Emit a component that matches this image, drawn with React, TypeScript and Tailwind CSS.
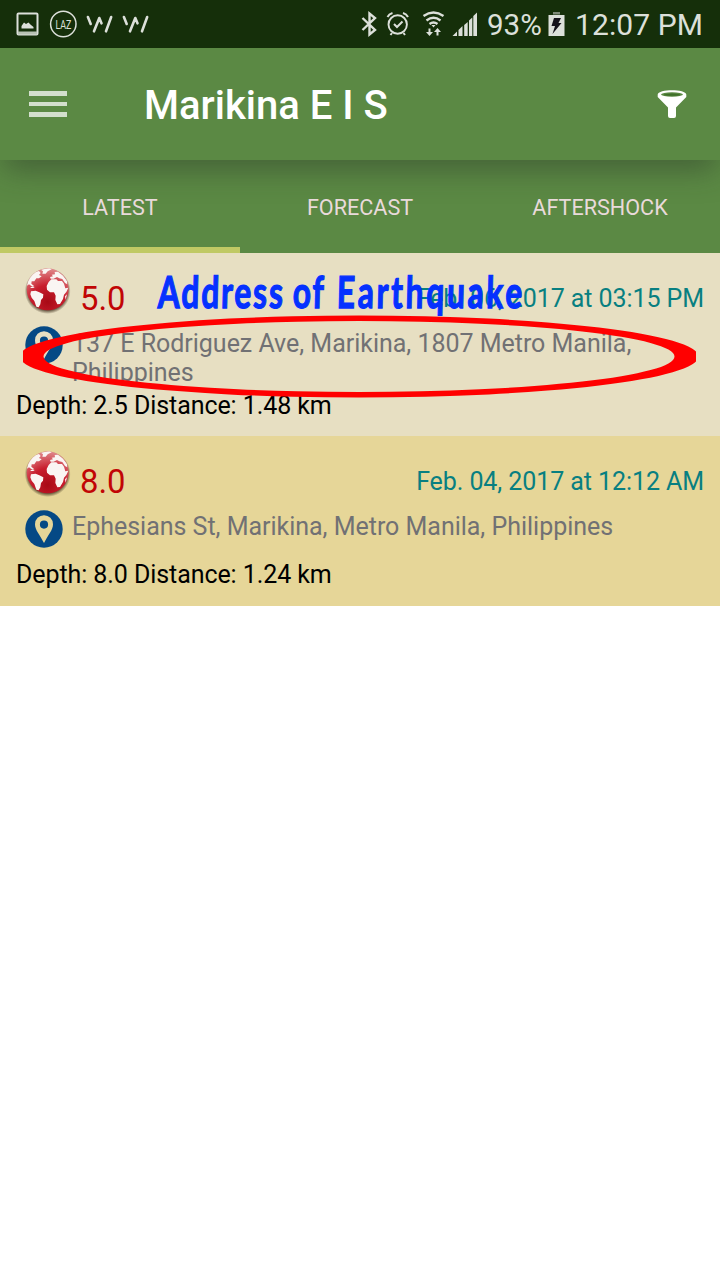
import React from "react";

const land = "#faf5f3";

function Globe() {
  return (
    <svg className="block h-[48px] w-[48px] shrink-0" viewBox="73 49 144 144">
      <defs>
        <radialGradient id="sea" cx="50%" cy="80%" r="80%">
          <stop offset="0" stopColor="#a80a16" />
          <stop offset=".5" stopColor="#c81d2d" />
          <stop offset="1" stopColor="#e08a8c" />
        </radialGradient>
        <radialGradient id="under">
          <stop offset=".85" stopColor="#3a2a18" stopOpacity=".7" />
          <stop offset="1" stopColor="#3a2a18" stopOpacity="0" />
        </radialGradient>
        <clipPath id="disc"><circle cx="144" cy="113" r="63" /></clipPath>
      </defs>
      <circle cx="144" cy="118" r="69" fill="url(#under)" />
      <circle cx="144" cy="113" r="63" fill="url(#sea)" />
      <g fill={land} clipPath="url(#disc)">
        <path d="M80 104L84 80 102 62 118 58 123 64 118 70 126 74 118 80 110 80 104 89 96 89 95 96 104 104 98 105 88 98Z" />
        <path d="M124 54L150 49 156 53 144 59 138 66 128 66 130 59Z" />
        <path d="M94 119L108 117 119 122 131 128 130 138 124 145 122 158 117 167 110 165 104 148 96 138 92 128Z" />
        <path d="M153 81L151 76 160 74 156 69 166 68 165 61 175 60 190 72 202 88 203 98 196 94 188 82 179 80 172 76 162 81Z" />
        <path d="M147 91L155 83 170 83 175 88 187 88 193 96 197 110 206 108 200 121 193 129 190 142 181 157 173 158 167 145 168 132 163 122 151 122 142 114 141 103Z" />
        <path d="M196 134L202 128 198 144Z" />
        <path d="M92 106L101 106 105 109 94 109Z" />
      </g>
    </svg>
  );
}

function Pin({ hole }: { hole: string }) {
  return (
    <svg className="block h-[38px] w-[38px] shrink-0" viewBox="0 0 38 38">
      <circle cx="19" cy="19" r="18.7" fill="#054985" />
      <path fillRule="evenodd" fill={hole} d="M19 5.2A9 9 0 0 0 10 14.2C10 20 15 25 19 33C23 25 28 20 28 14.2A9 9 0 0 0 19 5.2ZM19 10.5A4.1 4.1 0 1 1 19 18.7A4.1 4.1 0 0 1 19 10.5Z" />
    </svg>
  );
}

function StatusBar() {
  return (
    <div className="flex h-[48px] items-center bg-[#152f0a] text-[#dce0da]">
      <svg className="block h-[48px] w-[160px]" viewBox="0 0 160 48" fill="none" stroke="#dce0da">
        <rect x="17.5" y="13.5" width="20" height="21" rx="1" strokeWidth="2" />
        <path d="M18 33H37" strokeWidth="3" stroke="#b9c2b5" />
        <path d="M21.5 28.5V26L24 22.5 26 24 28.5 22.5 31 25 33.5 27V28.5Z" fill="#dce0da" stroke="none" />
        <circle cx="63.3" cy="24" r="12.7" strokeWidth="1.5" />
        <text x="55.4" y="28.8" fontSize="13" textLength="16" lengthAdjust="spacingAndGlyphs" fontFamily="Roboto, sans-serif" fill="#dce0da" stroke="none">LAZ</text>
        <g strokeWidth="2.6" strokeLinecap="round" strokeLinejoin="round">
          <path d="M87.900 17L90.700 24M94 31.300L99.300 18L101.500 23.300M106 31.300L111.200 17" />
          <path d="M123.900 17L126.700 24M130 31.300L135.300 18L137.500 23.300M142 31.300L147.200 17" />
        </g>
      </svg>
      <svg className="ml-[198px] block h-[48px] w-[122px]" viewBox="358 0 122 48" fill="none" stroke="#dce0da">
        <path d="M362.500 18L375 30L369.500 34.500V13.500L375 18L362.500 30" strokeWidth="2.400" />
        <circle cx="397.700" cy="24.500" r="9.200" strokeWidth="1.900" />
        <path d="M394 24L397 27L402.500 21.500M387.500 17Q389 14 392.500 13M403 13Q406.500 14 408 17M392 33L390.500 35M403.500 33L405 35" strokeWidth="2" />
        <path d="M423.500 16Q433.500 9 443.500 16M426.500 20.500Q433.500 15 440.500 20.500M429.500 24Q433.500 21 437.500 24" strokeWidth="2.300" />
        <path d="M431.500 25L433.500 27.500L435.500 25Z" fill="#dce0da" stroke="none" />
        <path d="M429.500 28.500V34M437.500 30V35.500" strokeWidth="2" />
        <path d="M426 32H433L429.500 36ZM434 32H441L437.500 28Z" fill="#dce0da" stroke="none" />
        <g fill="#dce0da" stroke="none">
          <path d="M452.500 36L457 31.500V36Z" />
          <path d="M458.500 30L462.500 26V36H458.500Z" />
          <path d="M464.200 25L467.700 22V36H464.200Z" />
          <path d="M469 20.500L472.300 17.500V36H469Z" />
          <path d="M473.300 16L477 12.500V36H473.300Z" />
        </g>
      </svg>
      <span className="ml-[7px] w-[55px] whitespace-nowrap pt-[2px] text-[29.500px] leading-[46px]">93%</span>
      <svg className="ml-[6px] block h-[26px] w-[17px]" viewBox="0 0 17 26">
        <path d="M5 1H12V3.500H5Z" fill="#7f8b79" />
        <path d="M.5 4H16.500V25H.5Z" fill="#dce0da" />
        <path d="M6 7H13L10.500 12H13.500L4.500 23L7 15H3.500Z" fill="#14121a" />
      </svg>
      <span className="ml-[10px] whitespace-nowrap pt-[2px] text-[30px] leading-[46px] tracking-[0.080px]">12:07 PM</span>
    </div>
  );
}

function AppBar() {
  return (
    <header className="h-[112px] bg-[#5b8944]">
      <div className="flex h-full items-center">
        <div className="ml-[29px] flex w-[38px] flex-col gap-[6px]">
          <div className="h-[4.500px] bg-[#d3dfcd]" />
          <div className="h-[4.500px] bg-[#d3dfcd]" />
          <div className="h-[4.500px] bg-[#d3dfcd]" />
        </div>
        <h1 className="ml-[77px] whitespace-nowrap pt-[4px] text-[40px] font-medium leading-[48px] text-white">Marikina E I S</h1>
        <svg className="ml-auto mr-[33px] block h-[30px] w-[30px]" viewBox="0 0 30 30">
          <path d="M.7 5.500C1-.2 29-.2 29.300 5.500V8L19 18.500V27Q19 29 17 29H13Q11 29 11 27V18.500L.7 8Z" fill="white" />
          <ellipse cx="15" cy="5.500" rx="11" ry="2.200" fill="#5b8944" />
          <ellipse cx="15" cy="5.700" rx="8" ry="1.100" fill="#3f702a" />
        </svg>
      </div>
    </header>
  );
}

const tabs = ["LATEST", "FORECAST", "AFTERSHOCK"];

function Tabs() {
  return (
    <nav className="relative grid h-[93px] grid-cols-3 overflow-hidden bg-[#5b8944]">
      <div className="absolute -top-[40px] left-0 h-[40px] w-full shadow-[0_12px_30px_-4px_rgba(40,50,40,0.5)]" />
      {tabs.map((name, i) => (
        <div key={name} className={i === 0 ? "relative border-b-[6px] border-[#c0c964] text-center" : "relative border-b-[6px] border-transparent text-center"}>
          <span className="block pt-[32px] text-[21.600px] leading-[32px] text-[#e9dadb]">{name}</span>
        </div>
      ))}
    </nav>
  );
}

type Quake = { magnitude: string; date: string; address: React.ReactNode; detail: string };

function QuakeRow({ magnitude, date, address, detail, tall }: Quake & { tall?: boolean }) {
  return (
    <article className={tall ? "h-[183px] bg-[#e7dfc2] px-[16px] pt-[15px]" : "h-[170px] bg-[#e6d698] px-[16px] pt-[15px]"}>
      <div className="flex h-[58px] items-start">
        <div className="ml-[8px]"><Globe /></div>
        <span className="ml-[8px] mt-[11px] text-[32.800px] leading-[40px] text-[#c10505]">{magnitude}</span>
        <span className="ml-auto mt-[15px] whitespace-nowrap text-[25px] leading-[32px] tracking-[-0.080px] text-[#087f81]">{date}</span>
      </div>
      <div className={tall ? "flex h-[64px] items-start" : "flex h-[50px] items-start"}>
        <div className={tall ? "ml-[9px]" : "ml-[9px] pt-[1px]"}><Pin hole={tall ? "#e7dfc2" : "#e6d698"} /></div>
        <p className="ml-[9px] mt-[3px] whitespace-nowrap text-[25px] leading-[29px] tracking-[-0.020px] text-[#717174]">{address}</p>
      </div>
      <p className="whitespace-nowrap text-[25px] leading-[32px] tracking-[-0.080px] text-black">{detail}</p>
    </article>
  );
}

export default function App() {
  return (
    <main className="relative h-[1280px] w-[720px] overflow-hidden bg-white font-['Roboto',sans-serif]">
      <StatusBar />
      <AppBar />
      <Tabs />
      <QuakeRow tall magnitude="5.0" date="Feb. 06, 2017 at 03:15 PM" address={<>137 E Rodriguez Ave, Marikina, 1807 Metro Manila,<br />Philippines</>} detail="Depth: 2.5 Distance: 1.48 km" />
      <QuakeRow magnitude="8.0" date="Feb. 04, 2017 at 12:12 AM" address="Ephesians St, Marikina, Metro Manila, Philippines" detail="Depth: 8.0 Distance: 1.24 km" />
      <svg className="absolute left-[23px] top-[310px] h-[92px] w-[673px] overflow-hidden" viewBox="23 310 673 92">
        <path fillRule="evenodd" fill="#ff0000" d="M19.500 356.500A339.500 41 0 0 1 698.500 356.500A339.500 41 0 0 1 19.500 356.500ZM43.500 356.500A315.500 35.500 0 0 0 674.500 356.500A315.500 35.500 0 0 0 43.500 356.500Z" />
      </svg>
      <div className="absolute left-[158px] top-[263px] flex w-[380px] whitespace-nowrap font-['Lato',sans-serif] text-[44px] font-bold leading-[56px] text-[#0531ff]">
        <span className="w-[135px]"><span className="inline-block origin-left scale-x-[0.720] skew-x-[-2deg] tracking-[2.600px] [-webkit-text-stroke:1.300px_#0531ff]">Address</span></span>
        <span className="w-[44px]"><span className="inline-block origin-left scale-x-[0.720] skew-x-[-2deg] tracking-[2.200px] [-webkit-text-stroke:1.300px_#0531ff]">of</span></span>
        <span className="w-[190px]"><span className="inline-block origin-left scale-x-[0.720] skew-x-[-2deg] tracking-[3.800px] [-webkit-text-stroke:1.300px_#0531ff]">Earthquake</span></span>
      </div>
    </main>
  );
}
